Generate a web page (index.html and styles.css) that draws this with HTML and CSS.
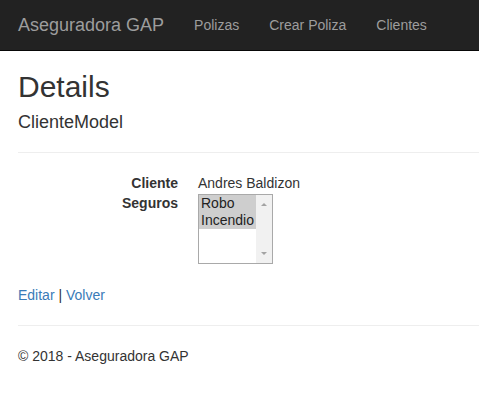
FILE: index.html
```html
<!DOCTYPE html>
<html lang="es">
<head>
<meta charset="utf-8">
<title>Details - Aseguradora GAP</title>
<link rel="stylesheet" href="styles.css">
</head>
<body>
<nav class="navbar">
  <a class="brand" href="#">Aseguradora GAP</a>
  <ul class="nav">
    <li><a href="#">Polizas</a></li>
    <li><a href="#">Crear Poliza</a></li>
    <li><a href="#">Clientes</a></li>
  </ul>
</nav>
<main class="content">
  <h2 class="title">Details</h2>
  <h4 class="subtitle">ClienteModel</h4>
  <hr class="rule rule-top">
  <dl class="details">
    <dt>Cliente</dt>
    <dd>Andres Baldizon</dd>
    <dt>Seguros</dt>
    <dd>
      <div class="listbox">
        <ul class="options">
          <li class="option selected">Robo</li>
          <li class="option selected">Incendio</li>
        </ul>
        <div class="scrollbar">
          <span class="arrow up"></span>
          <span class="arrow down"></span>
        </div>
      </div>
    </dd>
  </dl>
  <p class="actions"><a href="#">Editar</a> | <a href="#">Volver</a></p>
  <hr class="rule">
  <footer class="footer">
    <p>&copy; 2018 - Aseguradora GAP</p>
  </footer>
</main>
</body>
</html>
```
FILE: styles.css
```css
* { box-sizing: border-box; }
html, body { margin: 0; padding: 0; }
body {
  font-family: "Liberation Sans", Arial, sans-serif;
  font-size: 14px;
  line-height: 20px;
  color: #333;
  background: #fff;
  overflow: hidden;
}
a { color: #3a7bb8; text-decoration: none; }

.navbar {
  display: flex;
  align-items: stretch;
  height: 51px;
  background: #222;
  border-bottom: 1px solid #080808;
  padding-left: 3px;
}
.brand {
  color: #9d9d9d;
  font-size: 18px;
  line-height: 20px;
  padding: 15px;
}
.nav {
  display: flex;
  list-style: none;
  margin: 0;
  padding: 0;
}
.nav a {
  display: block;
  color: #9d9d9d;
  padding: 15px;
  line-height: 20px;
}

.content {
  padding: 19px 0 0 18px;
}
.title {
  font-size: 30px;
  font-weight: 500;
  line-height: 1.1;
  margin: 0 0 10px;
}
.subtitle {
  font-size: 18px;
  font-weight: 500;
  line-height: 1.1;
  margin: 10px 0 10px;
}
.rule {
  border: 0;
  border-top: 1px solid #eee;
  margin: 20px 0;
  height: 0;
}
.rule-top { margin-top: 19px; }
.details {
  display: grid;
  grid-template-columns: 160px 1fr;
  column-gap: 20px;
  margin: 0 0 20px;
}
.details dt {
  font-weight: bold;
  text-align: right;
}
.details dd { margin: 0; }

.listbox {
  display: flex;
  width: 75px;
  height: 70px;
  margin: 1px 0 1px;
  border: 1px solid #a9a9a9;
  background: #fff;
}
.options {
  flex: 1;
  list-style: none;
  margin: 0;
  padding: 0;
}
.option {
  height: 17px;
  line-height: 16px;
  padding: 0 2px;
  color: #222;
  white-space: nowrap;
}
.option.selected { background: #cecece; }
.scrollbar {
  width: 17px;
  background: #f1f1f1;
  display: flex;
  flex-direction: column;
  justify-content: space-between;
  align-items: center;
  padding: 8px 0;
}
.arrow {
  width: 0;
  height: 0;
  border-left: 3px solid transparent;
  border-right: 3px solid transparent;
}
.arrow.up { border-bottom: 3px solid #a3a3a3; }
.arrow.down { border-top: 3px solid #a3a3a3; }

.actions { margin: 0 0 10px; }
.footer p { margin: 0 0 10px; }
```
